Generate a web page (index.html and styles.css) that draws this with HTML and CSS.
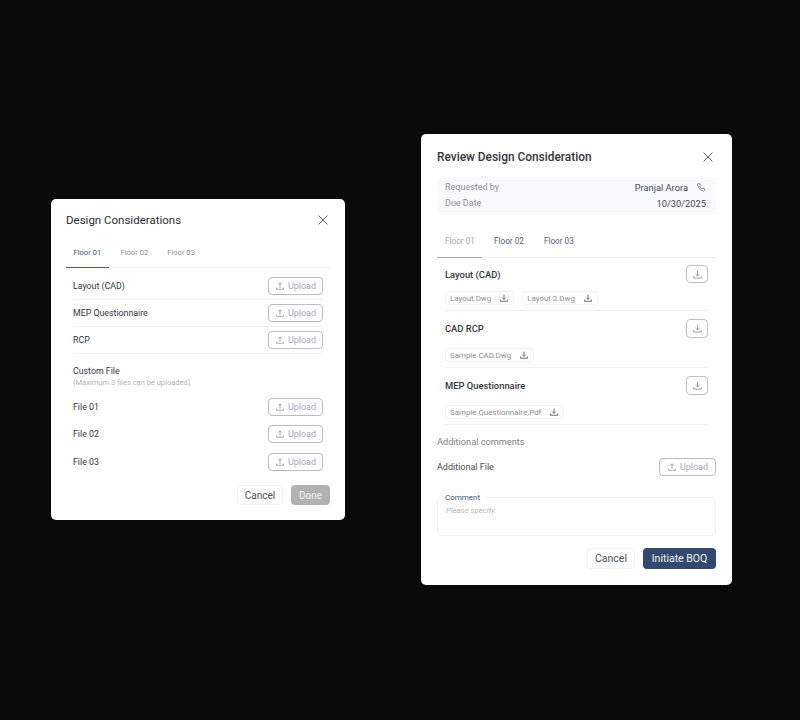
FILE: index.html
```html
<!DOCTYPE html>
<html lang="en">
<head>
    <meta charset="UTF-8">
    <meta name="viewport" content="width=device-width, initial-scale=1.0">
    <title>Design Considerations</title>
    <link rel="stylesheet" href="styles.css">
</head>
<body>
    <svg class="icon-defs" width="0" height="0">
        <symbol id="i-upload" viewBox="0 0 16 16"><path d="M8 10.500V3M5.200 5.600 8 2.800l2.800 2.800M2.500 10.500v2.700h11v-2.700" fill="none" stroke="currentColor" stroke-width="1.300"/></symbol>
        <symbol id="i-download" viewBox="0 0 16 16"><path d="M8 2.500V10M5.200 7.400 8 10.200l2.800-2.800M2.500 10.500v2.700h11v-2.700" fill="none" stroke="currentColor" stroke-width="1.300"/></symbol>
        <symbol id="i-close" viewBox="0 0 16 16"><path d="M3 3l10 10M13 3 3 13" fill="none" stroke="currentColor" stroke-width="1.100"/></symbol>
    </svg>

    <section class="modal modal-left">
        <header class="modal-head">
            <h2>Design Considerations</h2>
            <svg class="close"><use href="#i-close"/></svg>
        </header>
        <nav class="tabs">
            <span class="tab active">Floor 01</span>
            <span class="tab">Floor 02</span>
            <span class="tab">Floor 03</span>
        </nav>
        <div class="rows">
            <div class="row lined"><span>Layout (CAD)</span><button class="upload"><svg><use href="#i-upload"/></svg>Upload</button></div>
            <div class="row lined"><span>MEP Questionnaire</span><button class="upload"><svg><use href="#i-upload"/></svg>Upload</button></div>
            <div class="row lined"><span>RCP</span><button class="upload"><svg><use href="#i-upload"/></svg>Upload</button></div>
        </div>
        <div class="custom">
            <div class="custom-title">Custom File</div>
            <div class="custom-note">(Maximum 3 files can be uploaded)</div>
        </div>
        <div class="rows">
            <div class="row"><span>File 01</span><button class="upload"><svg><use href="#i-upload"/></svg>Upload</button></div>
            <div class="row"><span>File 02</span><button class="upload"><svg><use href="#i-upload"/></svg>Upload</button></div>
            <div class="row"><span>File 03</span><button class="upload"><svg><use href="#i-upload"/></svg>Upload</button></div>
        </div>
        <footer class="actions">
            <button class="btn cancel">Cancel</button>
            <button class="btn done">Done</button>
        </footer>
    </section>

    <section class="modal modal-right">
        <header class="modal-head">
            <h2>Review Design Consideration</h2>
            <svg class="close"><use href="#i-close"/></svg>
        </header>
        <div class="info">
            <div class="info-row">
                <span>Requested by</span>
                <span class="person">Pranjal Arora
                    <svg viewBox="0 0 16 16"><path d="M2.500 2.800 4.800 2l1.500 2.800-1.300 1.100c.8 1.800 2.300 3.300 4.100 4.100l1.100-1.300 2.800 1.500-.6 2.200c-.2.600-.8 1-1.400.9C6.800 12.200 3.800 9.200 2.200 4.200c-.2-.6 0-1.100.3-1.400z" fill="none" stroke="currentColor" stroke-width="1"/></svg>
                </span>
            </div>
            <div class="info-row">
                <span>Due Date</span>
                <span class="date">10/30/2025</span>
            </div>
        </div>
        <nav class="tabs">
            <span class="tab active">Floor 01</span>
            <span class="tab">Floor 02</span>
            <span class="tab">Floor 03</span>
        </nav>
        <div class="files">
            <div class="file-group">
                <div class="file-head"><span>Layout (CAD)</span><button class="icon-btn"><svg><use href="#i-download"/></svg></button></div>
                <div class="chips">
                    <span class="chip">Layout.Dwg<svg><use href="#i-download"/></svg></span>
                    <span class="chip">Layout 2.Dwg<svg><use href="#i-download"/></svg></span>
                </div>
            </div>
            <div class="file-group">
                <div class="file-head"><span>CAD RCP</span><button class="icon-btn"><svg><use href="#i-download"/></svg></button></div>
                <div class="chips">
                    <span class="chip">Sample CAD.Dwg<svg><use href="#i-download"/></svg></span>
                </div>
            </div>
            <div class="file-group">
                <div class="file-head"><span>MEP Questionnaire</span><button class="icon-btn"><svg><use href="#i-download"/></svg></button></div>
                <div class="chips">
                    <span class="chip">Sample Questionnaire.Pdf<svg><use href="#i-download"/></svg></span>
                </div>
            </div>
        </div>
        <div class="comments-title">Additional comments</div>
        <div class="additional">
            <span>Additional File</span>
            <button class="upload"><svg><use href="#i-upload"/></svg>Upload</button>
        </div>
        <div class="comment-box">
            <span class="comment-label">Comment</span>
            <span class="comment-hint">Please specify.</span>
        </div>
        <footer class="actions">
            <button class="btn cancel">Cancel</button>
            <button class="btn primary">Initiate BOQ</button>
        </footer>
    </section>
</body>
</html>
```

FILE: styles.css
```css
* {
    box-sizing: border-box;
}
body {
    font-family: 'Roboto', sans-serif;
    background: #0a0a0a;
    color: #2b2f36;
    margin: 0;
    height: 720px;
    overflow: hidden;
    position: relative;
}
button {
    font-family: inherit;
    cursor: pointer;
}
.icon-defs {
    position: absolute;
}
.modal {
    position: absolute;
    background: #fff;
    border-radius: 5px;
}
.modal-left {
    left: 51px;
    top: 199px;
    width: 294px;
    height: 321px;
    padding: 0 15px;
}
.modal-right {
    left: 421px;
    top: 134px;
    width: 311px;
    height: 451px;
    padding: 0 16px;
}
.modal-head {
    display: flex;
    justify-content: space-between;
    align-items: center;
    height: 42px;
}
.modal-right .modal-head {
    height: 43px;
    padding: 2px 1px 0 0;
}
.modal-head h2 {
    margin: 0;
    font-size: 11.500px;
    font-weight: 400;
    color: #2a2d33;
}
.modal-right .modal-head h2 {
    font-size: 11.900px;
    font-weight: 500;
    color: #33363c;
}
.close {
    width: 14px;
    height: 14px;
    color: #555b63;
}

/* tabs */
.tabs {
    display: flex;
    border-bottom: 1px solid #eceef1;
    height: 27px;
    margin-bottom: 4.500px;
}
.tab {
    font-size: 7.600px;
    color: #8a8f98;
    padding: 7px 7.500px 0;
    margin-right: 4px;
    height: 27px;
    white-space: nowrap;
}
.modal-left .tab.active {
    color: #3c5175;
    border-bottom: 1.500px solid #4a5a7a;
    width: 43px;
}
.modal-right .tabs {
    height: 38px;
    margin: 5px 0 6.500px;
}
.modal-right .tab {
    font-size: 8.200px;
    height: 38px;
    padding: 16px 8px 0;
    margin-right: 4px;
    color: #5d626b;
}
.modal-right .tab.active {
    color: #a5a9b0;
    border-bottom: 1.500px solid #a3a7b3;
    width: 45px;
}

/* upload rows */
.rows {
    padding: 0 7px;
}
.row {
    display: flex;
    justify-content: space-between;
    align-items: center;
    height: 27.300px;
    font-size: 8.800px;
    color: #33373d;
}
.row.lined {
    border-bottom: 1px solid #f0f1f3;
}
.upload {
    display: flex;
    align-items: center;
    justify-content: center;
    gap: 3px;
    width: 55px;
    height: 18px;
    padding: 0;
    font-size: 9px;
    font-weight: 400;
    color: #a3aabd;
    background: #fff;
    border: 1px solid #b9bcc4;
    border-radius: 4px;
}
.upload svg {
    width: 10px;
    height: 10px;
    color: #8f95a3;
}
.custom {
    padding: 11px 7px 4px;
}
.custom-title {
    font-size: 8.800px;
    color: #33373d;
    line-height: 12px;
}
.custom-note {
    font-size: 7.500px;
    color: #b0b3b9;
    line-height: 12px;
}
.actions {
    display: flex;
    justify-content: flex-end;
    gap: 8px;
}
.modal-left .actions {
    margin-top: 10px;
}
.btn {
    height: 20px;
    padding: 0;
    border-radius: 4px;
    font-size: 10px;
    border: none;
}
.cancel {
    width: 46px;
    color: #4a4e55;
    background: #fff;
    border: 1px solid #f1f2f4;
}
.done {
    width: 39px;
    color: #e6e6e6;
    font-weight: 500;
    background: #b1b1b1;
}

/* review modal */
.info {
    background: #f8fafc;
    border-radius: 3px;
    height: 38px;
    padding: 2px 9px 2px 8px;
}
.info-row {
    display: flex;
    justify-content: space-between;
    align-items: center;
    height: 16px;
    font-size: 9px;
    color: #8c9096;
}
.person {
    display: flex;
    align-items: center;
    gap: 8px;
    color: #3c4a66;
    font-size: 9.300px;
    font-weight: 400;
}
.person svg {
    width: 11px;
    height: 11px;
    color: #555b63;
}
.date {
    color: #3d4756;
    font-size: 9.300px;
    margin-right: 1px;
}
.files {
    padding: 0 8px;
}
.file-group {
    border-bottom: 1px solid #f0f1f3;
    padding-bottom: 5px;
    margin-bottom: 8px;
}
.file-group:last-child {
    margin-bottom: 0;
}
.file-head {
    display: flex;
    justify-content: space-between;
    align-items: center;
    height: 19px;
    font-size: 9.400px;
    font-weight: 500;
    color: #33373d;
}
.icon-btn {
    width: 22px;
    height: 18.500px;
    padding: 0;
    display: flex;
    align-items: center;
    justify-content: center;
    background: #fff;
    border: 1px solid #bcbfc5;
    border-radius: 4px;
    color: #8f95a3;
}
.icon-btn svg {
    width: 11px;
    height: 11px;
}
.chips {
    display: flex;
    gap: 8px;
    margin-top: 10px;
}
.file-group:first-child .chips {
    margin-top: 7.500px;
}
.chip {
    display: flex;
    align-items: center;
    justify-content: space-between;
    gap: 8px;
    height: 14px;
    padding: 0 4px;
    font-size: 7.900px;
    color: #8d9096;
    border: 1px solid #f1f2f4;
    border-radius: 3px;
}
.chip svg {
    width: 10px;
    height: 10px;
    color: #4a505a;
}
.comments-title {
    font-size: 9.200px;
    color: #7d8187;
    margin-top: 11px;
    line-height: 12px;
}
.additional {
    display: flex;
    justify-content: space-between;
    align-items: center;
    font-size: 9px;
    color: #4a4e55;
    height: 18px;
    margin-top: 10px;
}
.additional .upload {
    width: 57px;
}
.comment-box {
    position: relative;
    height: 39px;
    margin-top: 21px;
    padding: 8px 8px;
    border: 1px solid #eff0f2;
    border-radius: 5px;
}
.comment-label {
    position: absolute;
    left: 4px;
    top: -5px;
    padding: 0 5px 0 3px;
    background: #fff;
    font-size: 8px;
    color: #3c5175;
    line-height: 10px;
}
.comment-hint {
    display: block;
    font-size: 7.800px;
    font-style: italic;
    color: #b5b7bb;
    line-height: 10px;
}
.modal-right .actions {
    margin-top: 12px;
}
.modal-right .btn {
    height: 21px;
    font-size: 10.500px;
}
.modal-right .cancel {
    width: 48px;
}
.primary {
    width: 73px;
    color: #eef1f6;
    font-weight: 400;
    background: #34496f;
}
```
